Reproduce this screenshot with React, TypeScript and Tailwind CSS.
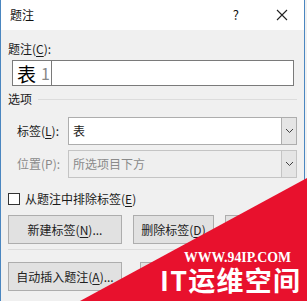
const font = { fontFamily: '"Noto Sans CJK SC", "Microsoft YaHei", sans-serif' };

function U({ children }: { children: string }) {
  return <span className="underline underline-offset-2">{children}</span>;
}

function Chevron() {
  return (
    <svg width="9" height="6" viewBox="0 0 9 6">
      <path d="M1 1 L4.5 4.5 L8 1" fill="none" stroke="#404040" strokeWidth="1" />
    </svg>
  );
}

function Btn({ children, w }: { children?: React.ReactNode; w: string }) {
  return (
    <div className={`${w} h-[29px] shrink-0 flex items-center justify-center bg-[#e1e1e1] border border-[#adadad] text-[12px] text-[#222]`}>
      {children}
    </div>
  );
}

export default function App() {
  return (
    <div className="w-[307px] h-[301px] relative overflow-hidden bg-[#f0f0f0]" style={font}>
      <div className="w-[305px] h-[301px] border-x border-[#4a86c0] flex flex-col">
        {/* title bar */}
        <div className="h-[30px] shrink-0 bg-white flex items-center pl-[9px] text-[12px] text-[#111]">
          <span>题注</span>
          <span className="ml-auto text-[13px] mr-[37px]">?</span>
          <svg width="12" height="12" viewBox="0 0 12 12" className="mr-[16px]">
            <path d="M1 1 L11 11 M11 1 L1 11" stroke="#222" strokeWidth="1.1" />
          </svg>
        </div>

        {/* body */}
        <div className="flex flex-col px-[7px] text-[12px] text-[#1a1a1a]">
          <div className="mt-[11px] h-[16px] leading-[16px]">
            题注(<U>C</U>):
          </div>
          <div className="mt-[3px] ml-[4px] w-[282px] h-[26px] bg-white border border-[#7a7a7a] flex items-center">
            <div className="h-full w-[39px] border-r border-[#7a7a7a] flex items-center pl-[4px]">
              <span className="text-[19px] leading-none text-black">表</span>
              <span className="text-[16px] leading-none text-[#888] ml-[5px]">1</span>
            </div>
          </div>

          <div className="mt-[5px] flex items-center h-[16px]">
            <span>选项</span>
            <div className="flex-1 ml-[6px] h-px bg-[#dcdcdc]" />
          </div>

          <div className="mt-[10px] flex items-center">
            <span className="w-[60px] pl-[9px] shrink-0 whitespace-nowrap">标签(<U>L</U>):</span>
            <div className="w-[229px] h-[28px] bg-white border border-[#adadad] flex items-center">
              <span className="pl-[4px] flex-1">表</span>
              <div className="w-[15px] h-full bg-[#e5e5e5] border-l border-[#adadad] flex items-center justify-center">
                <Chevron />
              </div>
            </div>
          </div>

          <div className="mt-[5px] flex items-center text-[#8a8a8a]">
            <span className="w-[60px] pl-[9px] shrink-0 whitespace-nowrap">位置(P):</span>
            <div className="w-[229px] h-[28px] bg-[#efefef] border border-[#c4c4c4] flex items-center">
              <span className="pl-[4px] flex-1">所选项目下方</span>
              <div className="w-[15px] h-full bg-[#e5e5e5] border-l border-[#c4c4c4] flex items-center justify-center">
                <Chevron />
              </div>
            </div>
          </div>

          <div className="mt-[12px] flex items-center">
            <div className="w-[12px] h-[12px] bg-white border border-[#333]" />
            <span className="ml-[5px]">从题注中排除标签(<U>E</U>)</span>
          </div>

          <div className="mt-[7px] flex gap-[11px]">
            <Btn w="w-[114px]">新建标签(<U>N</U>)...</Btn>
            <Btn w="w-[81px]">删除标签(<U>D</U>)</Btn>
            <Btn w="w-[81px]" />
          </div>

          <div className="mt-[5px] h-px bg-[#dcdcdc]" />

          <div className="mt-[12px] flex gap-[18px]">
            <Btn w="w-[114px]">自动插入题注(<U>A</U>)...</Btn>
            <Btn w="w-[81px]" />
          </div>
        </div>
      </div>

      {/* watermark overlay */}
      <svg className="absolute left-0 top-0" width="307" height="301" viewBox="0 0 307 301">
        <polygon points="80,301 307,178 307,301" fill="#e8112d" />
        <text x="184" y="262" fill="#fff" fontFamily="Liberation Serif, serif" fontWeight="bold" fontSize="14.5" textLength="107" lengthAdjust="spacingAndGlyphs">
          WWW.94IP.COM
        </text>
        <text x="160" y="291" fill="#fff" fontFamily="Noto Sans CJK SC, sans-serif" fontWeight="bold" fontSize="27" textLength="140" lengthAdjust="spacing">
          IT运维空间
        </text>
      </svg>
    </div>
  );
}
